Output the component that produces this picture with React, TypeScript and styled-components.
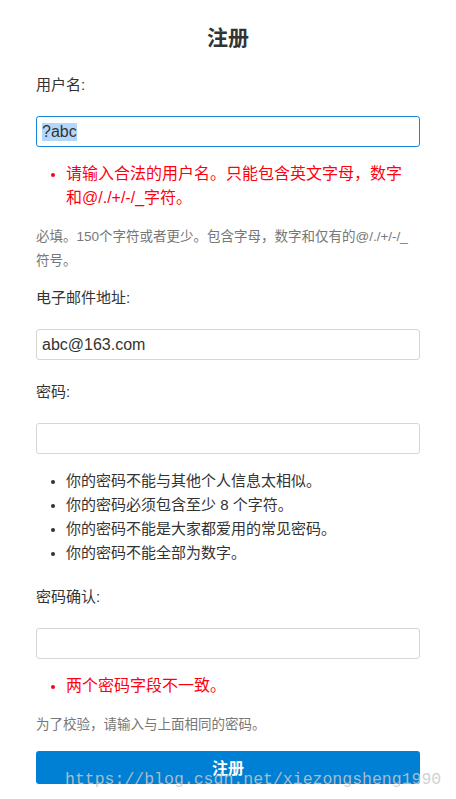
import styled, { createGlobalStyle } from 'styled-components';

const GlobalStyle = createGlobalStyle`
  body {
    margin: 0;
    background: #fff;
    font-family: 'Liberation Sans', 'Noto Sans CJK SC', sans-serif;
    color: #333;
  }
`;

const Page = styled.div`
  position: relative;
  width: 456px;
  min-height: 799px;
  overflow: hidden;
`;

const Form = styled.form`
  display: flex;
  flex-direction: column;
  padding: 22px 36px 0;
`;

const Title = styled.h2`
  margin: 0 0 24px;
  font-family: 'Noto Sans CJK SC', sans-serif;
  font-size: 21px;
  line-height: 28px;
  font-weight: 700;
  text-align: center;
  color: #333;
`;

const Field = styled.div<{ $help?: boolean }>`
  display: flex;
  flex-direction: column;
  margin-bottom: ${(p) => (p.$help ? '14px' : '21px')};
`;

const Label = styled.label`
  font-size: 15px;
  line-height: 22px;
  margin-bottom: 20px;
`;

const Input = styled.input`
  box-sizing: border-box;
  width: 100%;
  height: 31px;
  padding: 0 5px;
  font-family: 'Liberation Sans', sans-serif;
  font-size: 16px;
  color: #333;
  background: #fff;
  border: 1px solid #d6d6d6;
  border-radius: 3px;
  outline: none;
`;

const FocusedInput = styled.div`
  box-sizing: border-box;
  display: flex;
  align-items: center;
  width: 100%;
  height: 31px;
  padding: 0 5px;
  font-family: 'Liberation Sans', sans-serif;
  font-size: 16px;
  color: #333;
  border: 1px solid #1a86d6;
  border-radius: 3px;
`;

const Selected = styled.span`
  background: #b3d7fb;
`;

const List = styled.ul<{ $error?: boolean }>`
  margin: 15px 4px 0 0;
  padding: 0 0 0 30px;
  font-size: ${(p) => (p.$error ? '16px' : '15px')};
  line-height: 24px;
  color: ${(p) => (p.$error ? '#ff0010' : '#333')};
  li::marker {
    font-size: 14px;
  }
`;

const Help = styled.p`
  margin: 15px 0 0;
  font-size: 13.5px;
  line-height: 24px;
  color: #777;
`;

const Submit = styled.button`
  height: 33px;
  border: none;
  border-radius: 3px;
  background: #0080d4;
  color: #fff;
  font-family: 'Noto Sans CJK SC', sans-serif;
  font-size: 16px;
  font-weight: 700;
  line-height: 33px;
  padding: 0;
`;

const Watermark = styled.div`
  position: absolute;
  left: 65px;
  top: 770px;
  font-family: 'Liberation Mono', monospace;
  font-size: 16.5px;
  color: rgba(200, 200, 200, 0.85);
  white-space: nowrap;
  pointer-events: none;
`;

const passwordRules = [
  '你的密码不能与其他个人信息太相似。',
  '你的密码必须包含至少 8 个字符。',
  '你的密码不能是大家都爱用的常见密码。',
  '你的密码不能全部为数字。',
];

export default function App() {
  return (
    <Page>
      <GlobalStyle />
      <Form onSubmit={(e) => e.preventDefault()}>
        <Title>注册</Title>

        <Field $help>
          <Label htmlFor='username'>用户名:</Label>
          <FocusedInput id='username'>
            <Selected>?abc</Selected>
          </FocusedInput>
          <List $error>
            <li>请输入合法的用户名。只能包含英文字母，数字和@/./+/-/_字符。</li>
          </List>
          <Help>必填。150个字符或者更少。包含字母，数字和仅有的@/./+/-/_符号。</Help>
        </Field>

        <Field>
          <Label htmlFor='email'>电子邮件地址:</Label>
          <Input id='email' type='text' defaultValue='abc@163.com' />
        </Field>

        <Field>
          <Label htmlFor='password1'>密码:</Label>
          <Input id='password1' type='password' />
          <List>
            {passwordRules.map((rule) => (
              <li key={rule}>{rule}</li>
            ))}
          </List>
        </Field>

        <Field $help>
          <Label htmlFor='password2'>密码确认:</Label>
          <Input id='password2' type='password' />
          <List $error>
            <li>两个密码字段不一致。</li>
          </List>
          <Help>为了校验，请输入与上面相同的密码。</Help>
        </Field>

        <Submit type='submit'>注册</Submit>
      </Form>
      <Watermark>https://blog.csdn.net/xiezongsheng1990</Watermark>
    </Page>
  );
}
